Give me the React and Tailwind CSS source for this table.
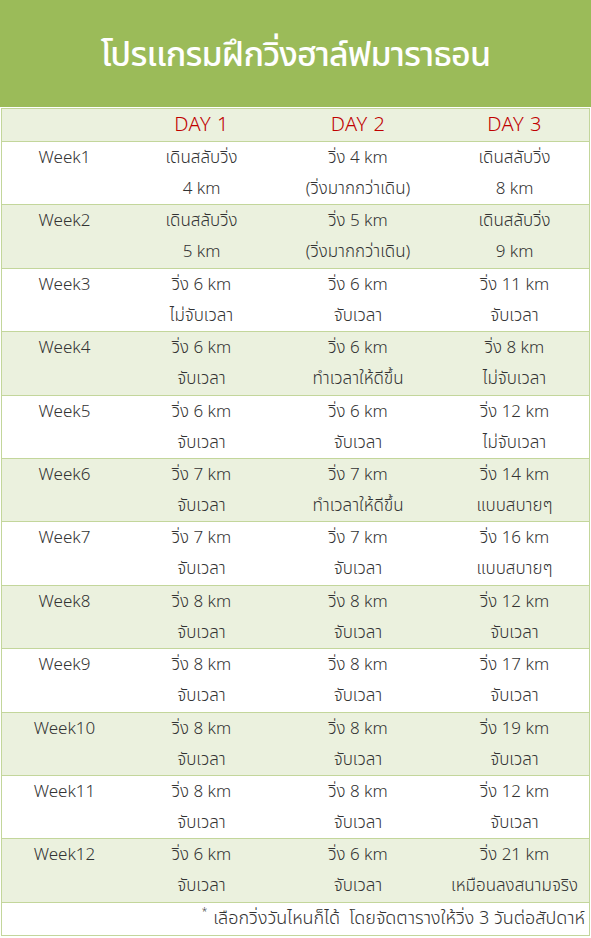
const rows = [
  ["Week1", ["เดินสลับวิ่ง", "4 km"], ["วิ่ง 4 km", "(วิ่งมากกว่าเดิน)"], ["เดินสลับวิ่ง", "8 km"]],
  ["Week2", ["เดินสลับวิ่ง", "5 km"], ["วิ่ง 5 km", "(วิ่งมากกว่าเดิน)"], ["เดินสลับวิ่ง", "9 km"]],
  ["Week3", ["วิ่ง 6 km", "ไม่จับเวลา"], ["วิ่ง 6 km", "จับเวลา"], ["วิ่ง 11 km", "จับเวลา"]],
  ["Week4", ["วิ่ง 6 km", "จับเวลา"], ["วิ่ง 6 km", "ทำเวลาให้ดีขึ้น"], ["วิ่ง 8 km", "ไม่จับเวลา"]],
  ["Week5", ["วิ่ง 6 km", "จับเวลา"], ["วิ่ง 6 km", "จับเวลา"], ["วิ่ง 12 km", "ไม่จับเวลา"]],
  ["Week6", ["วิ่ง 7 km", "จับเวลา"], ["วิ่ง 7 km", "ทำเวลาให้ดีขึ้น"], ["วิ่ง 14 km", "แบบสบายๆ"]],
  ["Week7", ["วิ่ง 7 km", "จับเวลา"], ["วิ่ง 7 km", "จับเวลา"], ["วิ่ง 16 km", "แบบสบายๆ"]],
  ["Week8", ["วิ่ง 8 km", "จับเวลา"], ["วิ่ง 8 km", "จับเวลา"], ["วิ่ง 12 km", "จับเวลา"]],
  ["Week9", ["วิ่ง 8 km", "จับเวลา"], ["วิ่ง 8 km", "จับเวลา"], ["วิ่ง 17 km", "จับเวลา"]],
  ["Week10", ["วิ่ง 8 km", "จับเวลา"], ["วิ่ง 8 km", "จับเวลา"], ["วิ่ง 19 km", "จับเวลา"]],
  ["Week11", ["วิ่ง 8 km", "จับเวลา"], ["วิ่ง 8 km", "จับเวลา"], ["วิ่ง 12 km", "จับเวลา"]],
  ["Week12", ["วิ่ง 6 km", "จับเวลา"], ["วิ่ง 6 km", "จับเวลา"], ["วิ่ง 21 km", "เหมือนลงสนามจริง"]],
];

const font = { fontFamily: '"Noto Sans Thai", "Leelawadee UI", Tahoma, "DejaVu Sans", "Noto Sans", sans-serif' };

function Cell({ lines }) {
  return (
    <div className="flex flex-col items-center text-[17px] leading-[31px] font-light text-[#333333]">
      {lines.map((l, i) => (
        <span key={i} className="whitespace-nowrap">{l}</span>
      ))}
    </div>
  );
}

export default function App() {
  return (
    <div className="w-[591px] h-[938px] bg-white overflow-hidden" style={font}>
      <div className="h-[107px] bg-[#9bbb59] flex items-center justify-center pt-[3px]">
        <h1 className="text-white text-[34px] font-medium tracking-tight">โปรแกรมฝึกวิ่งฮาล์ฟมาราธอน</h1>
      </div>
      <div className="mx-[1px] mt-[1px] w-[589px] border border-[#c3d69b]">
        <div className="grid grid-cols-[125px_149px_164px_1fr] h-[33px] bg-[#ebf1de] border-b border-[#c3d69b] items-center">
          <div />
          <div className="text-center text-[#c00000] text-[20px] font-light tracking-wide">DAY 1</div>
          <div className="text-center text-[#c00000] text-[20px] font-light tracking-wide">DAY 2</div>
          <div className="text-center text-[#c00000] text-[20px] font-light tracking-wide">DAY 3</div>
        </div>
        {rows.map((r, i) => (
          <div
            key={r[0]}
            className={`grid grid-cols-[125px_149px_164px_1fr] h-[63.4px] border-b border-[#c3d69b] pt-[1px] ${i % 2 === 1 ? "bg-[#ebf1de]" : "bg-white"}`}
          >
            <div className="text-center text-[17px] leading-[31px] font-light text-[#333333]">{r[0]}</div>
            <Cell lines={r[1]} />
            <Cell lines={r[2]} />
            <Cell lines={r[3]} />
          </div>
        ))}
        <div className="h-[32px] flex items-center justify-end pr-[4px] text-[18px] font-light text-[#333333] bg-white">
          <span className="text-[10px] relative -top-[6px] mr-[6px]">*</span>
          <span>เลือกวิ่งวันไหนก็ได้&nbsp; โดยจัดตารางให้วิ่ง 3 วันต่อสัปดาห์</span>
        </div>
      </div>
    </div>
  );
}
